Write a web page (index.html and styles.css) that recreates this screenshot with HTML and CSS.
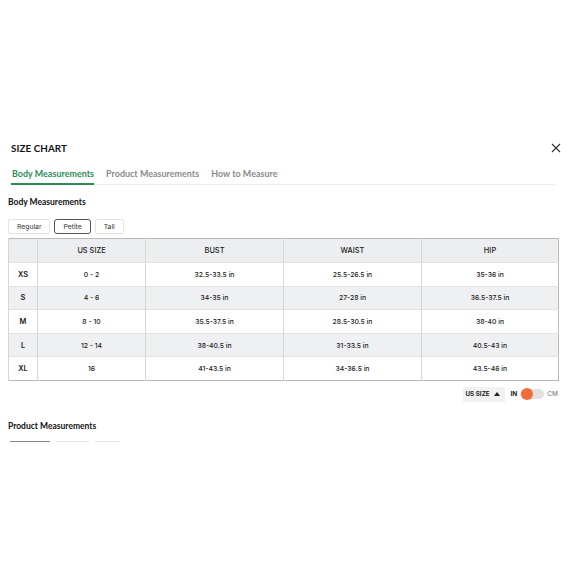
FILE: index.html
```html
<!DOCTYPE html>
<html>
<head>
<meta charset="utf-8">
<link rel="stylesheet" href="styles.css">
</head>
<body>
<div class="modal">
  <div class="head">
    <div class="title">SIZE CHART</div>
    <svg class="close" width="10" height="10" viewBox="0 0 10 10"><path d="M1 1L9 9M9 1L1 9" stroke="#333" stroke-width="1.1" fill="none"/></svg>
  </div>
  <div class="tabs">
    <div class="tab active">Body Measurements</div>
    <div class="tab">Product Measurements</div>
    <div class="tab">How to Measure</div>
  </div>
  <div class="sub">Body Measurements</div>
  <div class="fits">
    <div class="fit">Regular</div>
    <div class="fit sel">Petite</div>
    <div class="fit">Tall</div>
  </div>
  <table class="chart">
    <colgroup><col class="c0"><col class="c1"><col class="c2"><col class="c3"><col class="c4"></colgroup>
    <tr class="hdr"><th></th><th>US SIZE</th><th>BUST</th><th>WAIST</th><th>HIP</th></tr>
    <tr><td class="sz">XS</td><td>0 - 2</td><td>32.5-33.5 in</td><td>25.5-26.5 in</td><td>35-36 in</td></tr>
    <tr class="alt"><td class="sz">S</td><td>4 - 6</td><td>34-35 in</td><td>27-28 in</td><td>36.5-37.5 in</td></tr>
    <tr><td class="sz">M</td><td>8 - 10</td><td>35.5-37.5 in</td><td>28.5-30.5 in</td><td>38-40 in</td></tr>
    <tr class="alt"><td class="sz">L</td><td>12 - 14</td><td>38-40.5 in</td><td>31-33.5 in</td><td>40.5-43 in</td></tr>
    <tr><td class="sz">XL</td><td>16</td><td>41-43.5 in</td><td>34-36.5 in</td><td>43.5-46 in</td></tr>
  </table>
  <div class="controls">
    <div class="sort">US SIZE <span class="tri"></span></div>
    <div class="unit on">IN</div>
    <div class="toggle"><span class="knob"></span></div>
    <div class="unit">CM</div>
  </div>
  <div class="sub sub2">Product Measurements</div>
  <div class="ghost">
    <span class="g1"></span><span class="g2"></span><span class="g3"></span>
  </div>
</div>
</body>
</html>
```
FILE: styles.css
```css
* { box-sizing: border-box; }
html, body { margin: 0; padding: 0; background: #fff; }
body { width: 580px; height: 580px; font-family: Lato, "Noto Sans", sans-serif; color: #1a1a1a; }
.modal { padding: 141px 22px 0 8px; }
.head { display: flex; justify-content: space-between; align-items: center; padding-left: 3px; height: 14px; }
.title { font-weight: 700; font-size: 9.8px; letter-spacing: 0.1px; color: #111; }
.close { margin-right: -3px; }
.tabs { display: flex; gap: 12px; margin: 13px 3px 0 2px; border-bottom: 1px solid #ececec; padding-left: 1px; }
.tab { font-size: 8.9px; font-weight: 700; color: #8a8a8a; padding: 0 0 4px; letter-spacing: 0.05px; }
.tab.active { color: #2e8b57; border-bottom: 2px solid #2e8b57; margin-bottom: -1px; padding-left: 1px; }
.sub { font-weight: 700; font-size: 8.5px; color: #111; margin-top: 12px; }
.fits { display: flex; gap: 4px; margin-top: 12px; }
.fit { font-family: Inter, sans-serif; font-size: 6.8px; color: #333; border: 1px solid #e4e4e4; border-radius: 2px; height: 15px; display: flex; align-items: center; padding: 0 8px; }
.fit.sel { border-color: #555; border-radius: 3px; padding: 0 8px; }
.chart { margin-top: 4px; width: 550px; border-collapse: collapse; border: 1px solid #b9b9b9; font-family: Inter, sans-serif; table-layout: fixed; }
.c0 { width: 29px; } .c1 { width: 108px; } .c2 { width: 138px; } .c3 { width: 138px; } .c4 { width: 137px; }
.chart th, .chart td { border-left: 1px solid #d6d6d6; text-align: center; padding: 0; height: 23.6px; }
.chart th { font-weight: 500; font-size: 7.4px; color: #1a1a1a; background: #eceef0; height: 24px; }
.chart td { font-size: 6.8px; font-weight: 500; color: #1a1a1a; border-top: 1px solid #e2e2e2; }
.chart td.sz { font-size: 7.4px; font-weight: 600; }
.chart tr.alt td { background: #eef0f2; }
.controls { display: flex; justify-content: flex-end; align-items: center; margin-top: 6px; height: 15px; }
.sort { background: #f1f1f1; height: 15px; width: 42px; font-family: Inter, sans-serif; font-weight: 700; font-size: 6.3px; color: #222; display: flex; align-items: center; padding-left: 3px; gap: 4px; }
.tri { width: 0; height: 0; border-left: 3px solid transparent; border-right: 3px solid transparent; border-bottom: 4px solid #222; }
.unit { font-family: Inter, sans-serif; font-size: 6.5px; font-weight: 700; color: #222; margin-left: 6px; }
.unit:last-child { font-weight: 500; color: #888; margin-left: 3px; }
.toggle { width: 24px; height: 10px; background: #e1e1e1; border-radius: 5px; margin-left: 3px; position: relative; }
.knob { position: absolute; left: 1px; top: -1px; width: 12px; height: 12px; border-radius: 50%; background: #f26b3a; }
.sub2 { margin-top: 19px; }
.ghost { display: flex; margin-top: 10px; padding-left: 2px; gap: 6px; }
.ghost span { height: 1px; display: block; }
.g1 { width: 40px; background: #888; }
.g2 { width: 33px; background: #e2e2e2; }
.g3 { width: 25px; background: #e6e6e6; }
```
